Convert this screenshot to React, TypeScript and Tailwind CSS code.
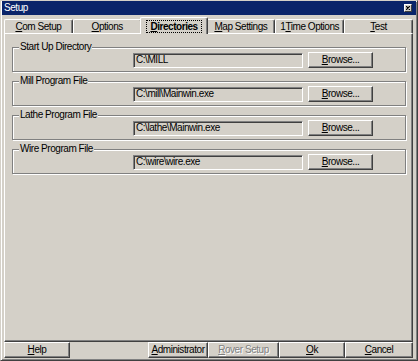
import React from "react";

const FONT = "font-['Liberation_Sans',Arial,sans-serif]";

function U({ pre = "", c, rest }: { pre?: string; c: string; rest: string }) {
  return (
    <span className="whitespace-nowrap">
      {pre}
      <span className="underline underline-offset-[1px]">{c}</span>
      {rest}
    </span>
  );
}

function Tab({ pre, c, rest, selected }: { pre?: string; c: string; rest: string; selected?: boolean }) {
  if (selected) {
    return (
      <div className="relative z-10 -mx-[2px] mb-[-1px] flex h-[17px] flex-1 items-center justify-center rounded-t-[2px] border-l border-t border-r border-l-white border-t-white border-r-[#404040] bg-[#d4d0c8] shadow-[inset_-1px_0_0_#808080]">
        <span className="border border-dotted border-black px-[3px] leading-[11px] font-bold">
          <U pre={pre} c={c} rest={rest} />
        </span>
      </div>
    );
  }
  return (
    <div className="flex h-[14px] flex-1 items-center justify-center rounded-t-[2px] border-l border-t border-r border-l-white border-t-white border-r-[#404040] shadow-[inset_-1px_0_0_#808080]">
      <U pre={pre} c={c} rest={rest} />
    </div>
  );
}

function Btn({
  c,
  rest,
  w,
  disabled,
}: {
  c: string;
  rest: string;
  w: string;
  disabled?: boolean;
}) {
  return (
    <div
      className={`${w} flex h-[16px] shrink-0 items-center justify-center border border-l-white border-t-white border-r-[#404040] border-b-[#404040] bg-[#d4d0c8] shadow-[inset_-1px_-1px_0_#808080] ${
        disabled ? "text-[#808080] [text-shadow:1px_1px_0_#ffffff]" : "text-black"
      }`}
    >
      <U c={c} rest={rest} />
    </div>
  );
}

function Group({ label, value }: { label: string; value: string }) {
  return (
    <div className="relative flex h-[25px] items-center border border-[#808080] pt-[1px] shadow-[inset_1px_1px_0_#ffffff,1px_1px_0_#ffffff]">
      <span className="absolute left-[6px] top-[-7px] bg-[#d4d0c8] px-[1px] leading-[12px]">{label}</span>
      <div className="ml-[120px] flex h-[15px] w-[170px] items-center border border-l-[#808080] border-t-[#808080] border-r-white border-b-white pl-[2px] shadow-[inset_1px_1px_0_#404040]">
        {value}
      </div>
      <div className="ml-[5px]">
        <Btn c="B" rest="rowse..." w="w-[65px]" />
      </div>
    </div>
  );
}

export default function App() {
  return (
    <div
      className={`${FONT} flex h-[361px] w-[418px] flex-col border border-l-[#d4d0c8] border-t-[#d4d0c8] border-r-[#404040] border-b-[#404040] bg-[#d4d0c8] text-[10px] leading-none tracking-[-0.45px] text-black shadow-[inset_1px_1px_0_#ffffff,inset_-1px_-1px_0_#808080]`}
    >
      <div className="mx-[1px] flex h-[14px] shrink-0 items-center justify-between bg-[#0a246a] pl-[2px] pr-[4px] text-white">
        <span>Setup</span>
        <div className="flex h-[8px] w-[8px] items-center justify-center border border-l-white border-t-white border-r-[#404040] border-b-[#404040] bg-[#d4d0c8]">
          <svg width="4" height="4" viewBox="0 0 4 4">
            <path d="M0 0L4 4M4 0L0 4" stroke="#000" strokeWidth="1.2" />
          </svg>
        </div>
      </div>
      <div className="flex flex-1 flex-col pl-[3px] pr-[4px] pt-[2px] pb-[2px]">
        <div className="flex h-[16px] shrink-0 items-end">
          <Tab c="C" rest="om Setup" />
          <Tab c="O" rest="ptions" />
          <Tab c="D" rest="irectories" selected />
          <Tab c="M" rest="ap Settings" />
          <Tab pre="1" c="T" rest="ime Options" />
          <Tab c="T" rest="est" />
        </div>
        <div className="flex flex-1 flex-col gap-[9px] border border-l-white border-t-white border-r-[#404040] border-b-[#404040] pl-[7px] pr-[6px] pt-[13px] shadow-[inset_-1px_-1px_0_#808080]">
          <Group label="Start Up Directory" value="C:\MILL" />
          <Group label="Mill Program File" value="C:\mill\Mainwin.exe" />
          <Group label="Lathe Program File" value="C:\lathe\Mainwin.exe" />
          <Group label="Wire Program File" value="C:\wire\wire.exe" />
        </div>
        <div className="flex h-[16px] shrink-0 items-stretch">
          <Btn c="H" rest="elp" w="w-[66px]" />
          <div className="flex-1" />
          <Btn c="A" rest="dministrator" w="w-[60px]" />
          <Btn c="R" rest="over Setup" w="w-[71px]" disabled />
          <Btn c="O" rest="k" w="w-[66px]" />
          <Btn c="C" rest="ancel" w="w-[68px]" />
        </div>
      </div>
    </div>
  );
}
